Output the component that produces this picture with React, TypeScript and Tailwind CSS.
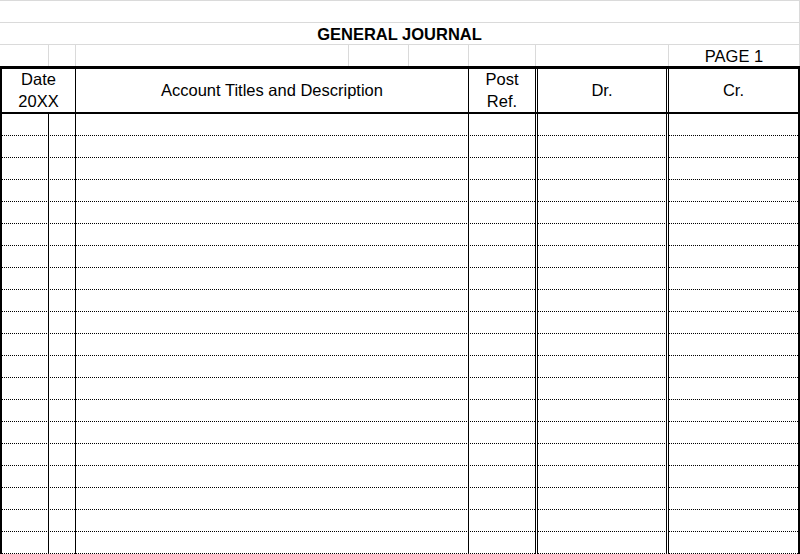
const ROWS = Array.from({ length: 20 }, (_, i) => i)

function GridRow({ children }: { children?: React.ReactNode }) {
  return (
    <div className="flex h-[22px] border-t border-r border-[#dadada]">
      {children}
    </div>
  )
}

export default function App() {
  return (
    <div className="w-[800px] h-[554px] overflow-hidden bg-white text-black text-[16.5px] font-['Liberation_Sans',Arial,sans-serif]">
      {/* sheet rows above the journal */}
      <GridRow />
      <GridRow>
        <div className="flex-1 flex items-end justify-center pb-px font-bold leading-[18.4px]">
          GENERAL JOURNAL
        </div>
      </GridRow>
      <GridRow>
        <div className="w-[48px]" />
        <div className="w-[27px] border-l border-[#dadada]" />
        <div className="w-[273px] border-l border-[#dadada]" />
        <div className="w-[60px] border-l border-[#dadada]" />
        <div className="w-[60px] border-l border-[#dadada]" />
        <div className="w-[67px] border-l border-[#dadada]" />
        <div className="w-[133px] border-l border-[#dadada]" />
        <div className="w-[131px] border-l border-[#dadada] flex items-end justify-center pb-px leading-[18.4px]">
          PAGE 1
        </div>
      </GridRow>

      {/* header */}
      <div className="flex h-[48px] border-t-[3px] border-b-2 border-black leading-[22px]">
        <div className="w-[75px] border-l-2 border-black flex flex-col items-center justify-center pb-[2px]">
          <span>Date</span>
          <span>20XX</span>
        </div>
        <div className="w-[393px] border-l border-black flex items-center justify-center pb-[2px]">
          Account Titles and Description
        </div>
        <div className="w-[67px] border-l border-black flex flex-col items-center justify-center pb-[2px]">
          <span>Post</span>
          <span>Ref.</span>
        </div>
        <div className="w-[131px] border-l-[3px] border-double border-black flex items-center justify-center pb-[2px]">
          Dr.
        </div>
        <div className="w-[134px] border-l-[3px] border-r-2 border-double border-black flex items-center justify-center pb-[2px]">
          Cr.
        </div>
      </div>

      {/* entry lines, dotted rule drawn under the column lines */}
      {ROWS.map((r) => (
        <div
          key={r}
          className="flex h-[22px] bg-[repeating-linear-gradient(90deg,#000_0_1px,transparent_1px_2px)] bg-no-repeat bg-bottom bg-[length:100%_1px]"
        >
          <div className="w-[48px] border-l-2 border-black" />
          <div className="w-[27px] border-l border-black" />
          <div className="w-[393px] border-l border-black" />
          <div className="w-[67px] border-l border-black" />
          <div className="w-[131px] border-l-[3px] border-double border-black bg-white bg-[repeating-linear-gradient(90deg,#000_0_1px,transparent_1px_2px)] bg-no-repeat bg-bottom bg-[length:100%_1px]" />
          <div className="w-[134px] border-l-[3px] border-r-2 border-double border-black bg-white bg-[repeating-linear-gradient(90deg,#000_0_1px,transparent_1px_2px)] bg-no-repeat bg-bottom bg-[length:100%_1px]" />
        </div>
      ))}
    </div>
  )
}
